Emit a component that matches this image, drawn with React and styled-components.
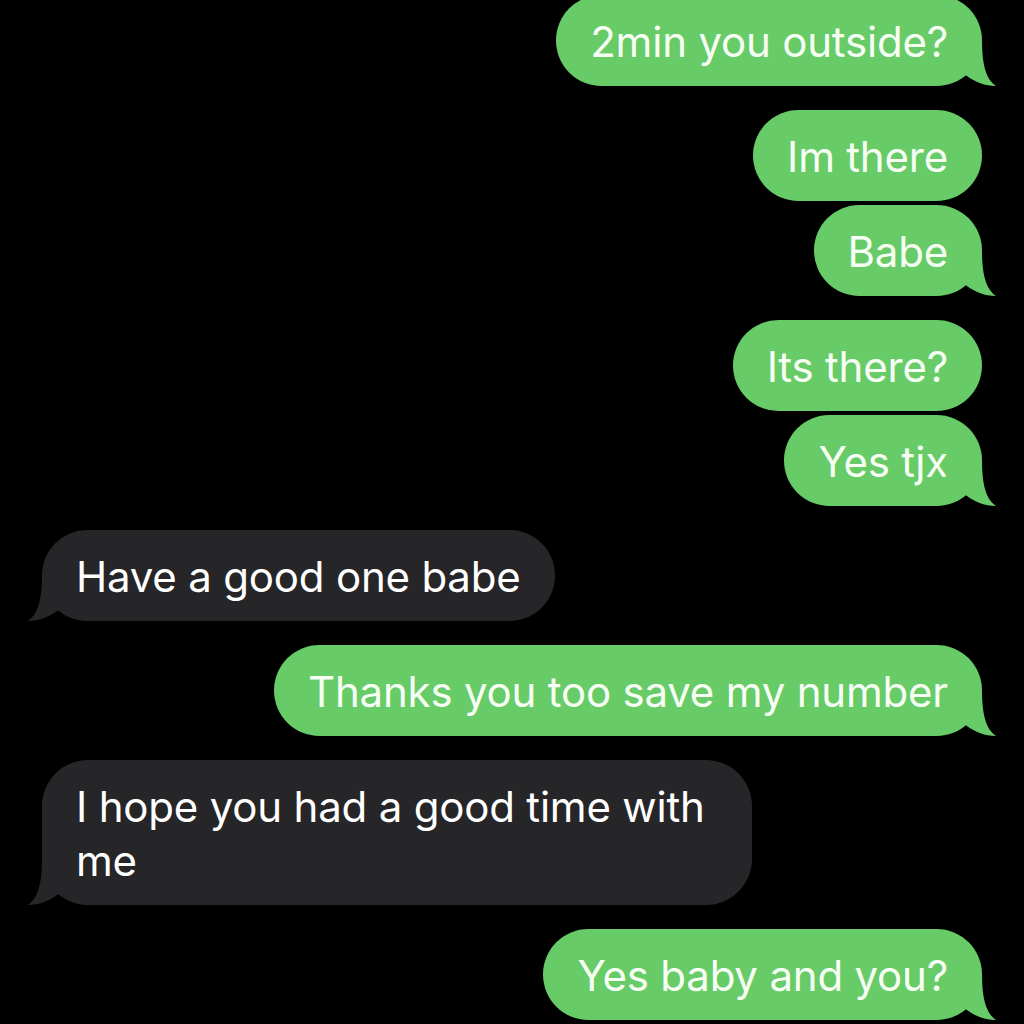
import React from "react"
import styled, { createGlobalStyle } from "styled-components"

const GlobalStyle = createGlobalStyle`
    html, body {
        margin: 0;
        padding: 0;
        background: #000000;
    }
`

const messages = [
    { side: "me", lines: ["2min you outside?"] },
    { side: "me", lines: ["Im there", "Babe"] },
    { side: "me", lines: ["Its there?", "Yes tjx"] },
    { side: "them", lines: ["Have a good one babe"] },
    { side: "me", lines: ["Thanks you too save my number"] },
    { side: "them", lines: ["I hope you had a good time with me"] },
    { side: "me", lines: ["Yes baby and you?"] },
]

function Tail({ side }) {
    return (
        <TailShape $side={side} width="60" height="50" viewBox="0 0 60 50">
            <path d="M44 4 C44 29 48 43 58 50 C47 50 37 46 29 40 L2 23 Z" />
        </TailShape>
    )
}

export default function App() {
    return (
        <>
            <GlobalStyle />
            <Thread>
                {messages.map((group, i) => (
                    <Group key={i} $side={group.side}>
                        {group.lines.map((text, j) => (
                            <Bubble key={j} $side={group.side}>
                                {text}
                                {j === group.lines.length - 1 && <Tail side={group.side} />}
                            </Bubble>
                        ))}
                    </Group>
                ))}
            </Thread>
        </>
    )
}

const Thread = styled.div`
    display: flex;
    flex-direction: column;
    gap: 24px;
    width: 1024px;
    box-sizing: border-box;
    padding: 0 42px;
    margin-top: -5px;
    font-family: Inter, "Liberation Sans", sans-serif;
`

const Group = styled.div`
    display: flex;
    flex-direction: column;
    gap: 4px;
    align-items: ${(p) => (p.$side === "me" ? "flex-end" : "flex-start")};
`

const Bubble = styled.div`
    position: relative;
    max-width: 710px;
    box-sizing: border-box;
    padding: 20px 34px 17px 34px;
    border-radius: 46px;
    font-size: 42px;
    line-height: 54px;
    font-weight: 400;
    letter-spacing: -0.2px;
    color: ${(p) => (p.$side === "me" ? "#f7fff5" : "#ffffff")};
    background: ${(p) => (p.$side === "me" ? "#67cb68" : "#262628")};
`

const TailShape = styled.svg`
    position: absolute;
    bottom: 0;
    ${(p) => (p.$side === "me" ? "right: -16px;" : "left: -16px; transform: scaleX(-1);")}
    fill: ${(p) => (p.$side === "me" ? "#67cb68" : "#262628")};
`
